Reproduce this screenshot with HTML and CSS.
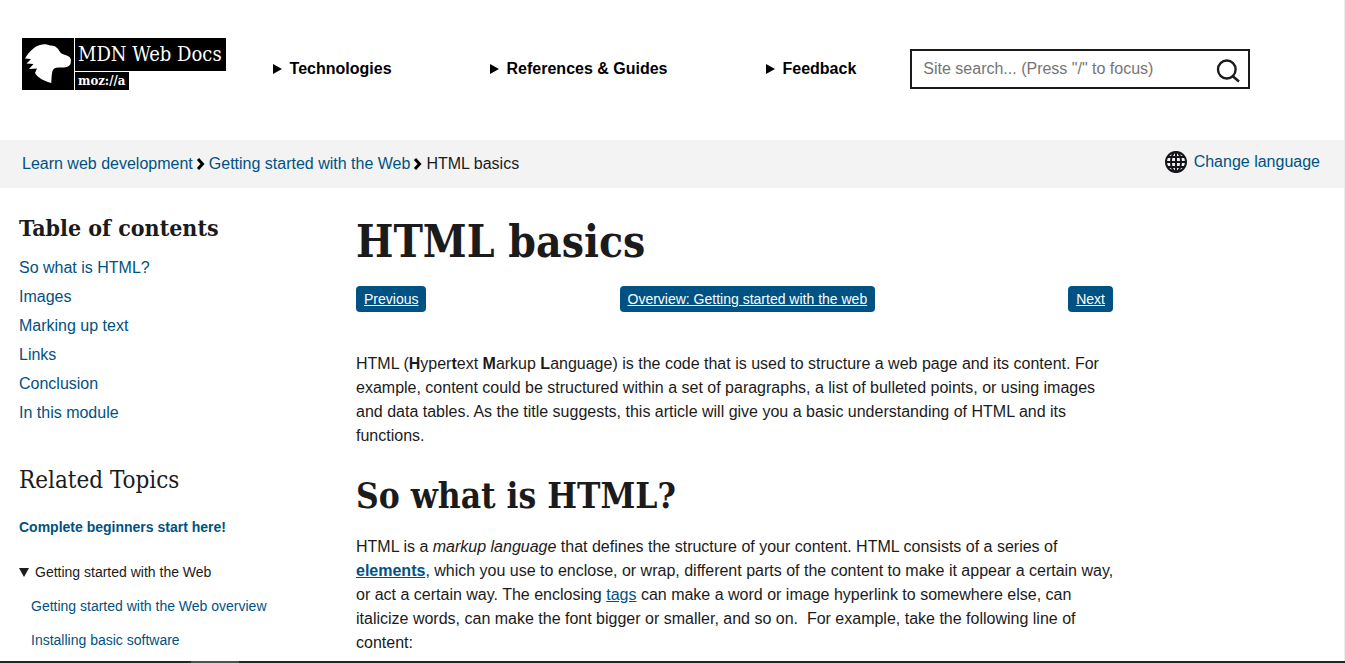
FILE: index.html
```html
<!DOCTYPE html>
<html lang="en">
<head>
<meta charset="utf-8">
<meta name="viewport" content="width=device-width, initial-scale=1">
<title>HTML basics - MDN Web Docs</title>
<link rel="stylesheet" href="styles.css">
</head>
<body>
<div class="page">
  <header class="header">
    <a class="logo" href="#" aria-label="MDN Web Docs">
      <svg class="logo-mark" viewBox="0 0 52 52" aria-hidden="true">
        <path fill="#000" d="M0 0h52v52H0z"/>
        <path fill="#fff" d="M3 20.500C7 14 12 8.500 18 7C22 5.500 26 6.500 28 7.500C33 7 36 10 38 14C40 17 45 16.500 48 19.500L49 22L48.500 26C47 29 43 29.500 39 29.500C34 29 31.500 30 30.500 33C29.500 37 29.500 41 29.300 45C22 43 16 40 13 35L15 30.500L7 31L11.500 26L4.500 25.500L9 21Z"/>
      </svg>
      <span class="logo-words">
        <span class="logo-name">MDN Web Docs</span>
        <span class="logo-org">moz://a</span>
      </span>
    </a>
    <nav class="nav" aria-label="Main">
      <details><summary class="nav-item">Technologies</summary></details>
      <details><summary class="nav-item">References &amp; Guides</summary></details>
      <details><summary class="nav-item">Feedback</summary></details>
    </nav>
    <form class="search" role="search">
      <input class="search-input" type="search" aria-label="Site search" placeholder="Site search... (Press &quot;/&quot; to focus)">
      <button class="search-button" type="button" aria-label="Search">
        <svg class="icon" viewBox="0 0 24 24" aria-hidden="true"><g fill="none" stroke="#1b1b1b" stroke-width="2.400"><ellipse cx="10.800" cy="10.500" rx="8.800" ry="9"/><path d="M16.500 17l6.500 5.500"/></g></svg>
      </button>
    </form>
  </header>

  <div class="crumb-bar">
    <nav class="crumbs" aria-label="Breadcrumb">
      <a href="#">Learn web development</a>
      <svg class="chevron" viewBox="0 0 10 12" aria-hidden="true"><path d="M2 1l4.500 5L2 11"/></svg>
      <a href="#">Getting started with the Web</a>
      <svg class="chevron" viewBox="0 0 10 12" aria-hidden="true"><path d="M2 1l4.500 5L2 11"/></svg>
      <span>HTML basics</span>
    </nav>
    <a class="language" href="#">
      <svg class="globe" viewBox="0 0 24 24" aria-hidden="true"><g fill="none" stroke="#15141a" stroke-width="2"><circle cx="12" cy="12" r="10"/><ellipse cx="12" cy="12" rx="5" ry="10"/><path d="M12 2v20M2 12h20M4 7h16M4 17h16"/></g></svg>
      Change language
    </a>
  </div>

  <div class="columns">
    <aside class="sidebar">
      <h2 class="toc-title">Table of contents</h2>
      <ul class="toc">
        <li><a href="#what">So what is HTML?</a></li>
        <li><a href="#">Images</a></li>
        <li><a href="#">Marking up text</a></li>
        <li><a href="#">Links</a></li>
        <li><a href="#">Conclusion</a></li>
        <li><a href="#">In this module</a></li>
      </ul>
      <h2 class="related-title">Related Topics</h2>
      <div class="related">
        <a class="start" href="#">Complete beginners start here!</a>
        <details open>
          <summary class="topic">Getting started with the Web</summary>
          <ul class="topic-list">
            <li><a href="#">Getting started with the Web overview</a></li>
            <li><a href="#">Installing basic software</a></li>
          </ul>
        </details>
      </div>
    </aside>

    <main class="article">
      <h1 class="title">HTML basics</h1>
      <nav class="pager" aria-label="Module">
        <a class="pager-link" href="#">Previous</a>
        <a class="pager-link" href="#">Overview: Getting started with the web</a>
        <a class="pager-link" href="#">Next</a>
      </nav>
      <p class="text">HTML (<strong>H</strong>yper<strong>t</strong>ext <strong>M</strong>arkup <strong>L</strong>anguage) is the code that is used to structure a web page and its content. For example, content could be structured within a set of paragraphs, a list of bulleted points, or using images and data tables. As the title suggests, this article will give you a basic understanding of HTML and its functions.</p>
      <h2 class="subtitle" id="what">So what is HTML?</h2>
      <p class="text">HTML is a <em>markup language</em> that defines the structure of your content. HTML consists of a series of <a href="#"><strong>elements</strong></a>, which you use to enclose, or wrap, different parts of the content to make it appear a certain way, or act a certain way. The enclosing <a href="#">tags</a> can make a word or image hyperlink to somewhere else, can italicize words, can make the font bigger or smaller, and so on.&nbsp; For example, take the following line of content:</p>
    </main>
  </div>
</div>
<div class="edge"><div class="edge-thumb"></div></div>
</body>
</html>
```
FILE: styles.css
```css
* { box-sizing: border-box; }

body {
  margin: 0;
  background: #fff;
  color: #1b1b1b;
  font: 16px/24px "Liberation Sans", Arial, sans-serif;
}

a { color: #005282; text-decoration: none; }
h1, h2, p, ul { margin: 0; padding: 0; }
ul { list-style: none; }
summary { list-style: none; cursor: pointer; }
svg { display: block; flex: none; }

.page { border-right: 1px solid #ececec; }

.header {
  display: flex;
  align-items: flex-start;
  padding: 38px 22px 50px;
}

.logo {
  display: flex;
  gap: 1px;
  color: #fff;
  font-family: "DejaVu Serif Condensed", "DejaVu Serif", serif;
  white-space: nowrap;
}
.logo-mark { width: 52px; height: 52px; }
.logo-words {
  display: flex;
  flex-direction: column;
  align-items: flex-start;
  gap: 1px;
}
.logo-name, .logo-org { background: #000; padding: 0 4px 0 3px; }
.logo-name { font-size: 20px; line-height: 33px; }
.logo-org { font-size: 13px; line-height: 18px; font-weight: bold; }

.nav { display: flex; gap: 98px; padding: 19px 0 0 47px; white-space: nowrap; }
.nav-item {
  display: flex;
  align-items: center;
  gap: 8px;
  color: #000;
  font-weight: bold;
}
.nav-item::before {
  content: "";
  border: solid transparent;
  border-width: 5px 0 5px 9px;
  border-left-color: #000;
}

.search {
  display: flex;
  align-items: center;
  width: 340px;
  height: 40px;
  margin: 11px 0 0 54px;
  padding: 0 8px 0 11px;
  border: 2px solid #1b1b1b;
}
.search-input {
  flex: 1;
  min-width: 0;
  padding: 0;
  border: 0;
  outline: 0;
  background: none;
  color: inherit;
  font: inherit;
}
.search-input::placeholder { color: #757575; }
.search-button { padding: 4px 0 0; border: 0; background: none; }
.icon { width: 24px; height: 24px; }

.crumb-bar {
  display: flex;
  justify-content: space-between;
  align-items: flex-start;
  padding: 10px 24px 12px 22px;
  background: #f3f3f3;
}
.crumbs { display: flex; align-items: center; gap: 3px; padding-top: 2px; }
.chevron {
  width: 10px;
  height: 12px;
  fill: none;
  stroke: #000;
  stroke-width: 3;
}
.language { display: flex; align-items: center; gap: 6px; }
.globe { width: 24px; height: 24px; }

.columns {
  display: grid;
  grid-template-columns: 337px minmax(0, 765px);
  padding: 24px 19px 4px;
}

.toc-title, .related-title, .title, .subtitle {
  font-family: "DejaVu Serif Condensed", "DejaVu Serif", serif;
  white-space: nowrap;
}
.toc-title { font-size: 23px; line-height: 32px; }
.toc { padding-top: 9px; }
.toc li { line-height: 29px; }
.related-title { padding-top: 37px; font-size: 24px; line-height: 32px; font-weight: normal; }
.related { padding-top: 19px; font-size: 14px; }
.start { font-weight: bold; }
.related details { padding-top: 21px; }
.topic { display: flex; align-items: center; gap: 6px; }
.topic::before {
  content: "";
  border: solid transparent;
  border-width: 9px 5px 0;
  border-top-color: #1b1b1b;
}
.topic-list { padding: 5px 0 0 12px; }
.topic-list li { line-height: 34px; }

.title { font-size: 44px; line-height: 60px; }
.pager { display: flex; justify-content: space-between; padding: 14px 8px 0 0; }
.pager-link {
  padding: 0 8px;
  border-radius: 4px;
  background: #005282;
  color: #fff;
  font-size: 14px;
  line-height: 26px;
  text-decoration: underline;
}
.pager + .text { padding-top: 40px; }
.text a { text-decoration: underline; }
.subtitle { padding: 24px 0 15px; font-size: 35px; line-height: 48px; }

.edge { height: 2px; background: #252525; }
.edge-thumb { width: 48px; height: 2px; margin-left: 191px; background: #505050; }
```
